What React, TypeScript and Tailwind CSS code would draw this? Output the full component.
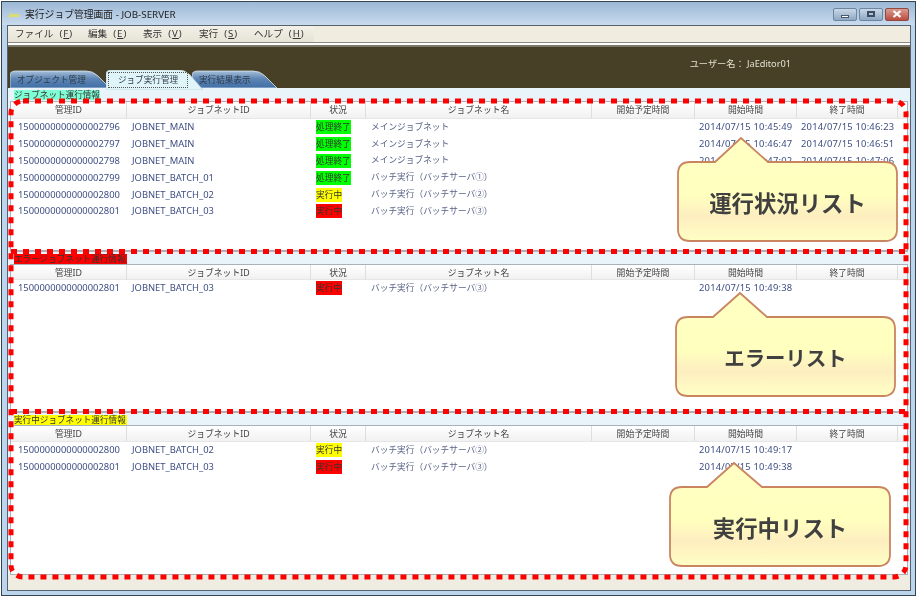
const SANS = "font-['Noto_Sans','Noto_Sans_CJK_JP',sans-serif]";

type Row = { id: string; net: string; status: string; tone: 'green' | 'yellow' | 'red'; name: string; start?: string; end?: string };

const COLS = 'grid-cols-[116px_184px_55px_226px_103px_102px_101px]';
const HEADS = ['管理ID', 'ジョブネットID', '状況', 'ジョブネット名', '開始予定時間', '開始時間', '終了時間'];

const running: Row[] = [
  { id: '1500000000000002796', net: 'JOBNET_MAIN', status: '処理終了', tone: 'green', name: 'メインジョブネット', start: '2014/07/15 10:45:49', end: '2014/07/15 10:46:23' },
  { id: '1500000000000002797', net: 'JOBNET_MAIN', status: '処理終了', tone: 'green', name: 'メインジョブネット', start: '2014/07/15 10:46:47', end: '2014/07/15 10:46:51' },
  { id: '1500000000000002798', net: 'JOBNET_MAIN', status: '処理終了', tone: 'green', name: 'メインジョブネット', start: '2014/07/15 10:47:02', end: '2014/07/15 10:47:06' },
  { id: '1500000000000002799', net: 'JOBNET_BATCH_01', status: '処理終了', tone: 'green', name: 'バッチ実行（バッチサーバ①）' },
  { id: '1500000000000002800', net: 'JOBNET_BATCH_02', status: '実行中', tone: 'yellow', name: 'バッチ実行（バッチサーバ②）' },
  { id: '1500000000000002801', net: 'JOBNET_BATCH_03', status: '実行中', tone: 'red', name: 'バッチ実行（バッチサーバ③）' },
];

const err: Row[] = [{ ...running[5], start: '2014/07/15 10:49:38' }];
const active: Row[] = [
  { ...running[4], start: '2014/07/15 10:49:17' },
  { ...running[5], start: '2014/07/15 10:49:38' },
];

const toneClass = { green: 'bg-[#00ff00]', yellow: 'bg-[#ffff00]', red: 'bg-[#ff0000]' };

function Table({ rows, headClass }: { rows: Row[]; headClass: string }) {
  return (
    <div className="flex-1 min-h-0 bg-white border border-[#a9b2b8] overflow-hidden">
      <div className={`grid ${COLS} ${headClass} bg-gradient-to-b from-white to-[#f1f1f1] border-b border-[#e6e6e6]`}>
        {HEADS.map((h) => (
          <div key={h} className="flex items-center justify-center pt-[2px] border-r border-[#dedede] text-[8.8px] text-[#444]">
            {h}
          </div>
        ))}
      </div>
      {rows.map((r) => (
        <div key={r.id} className={`grid ${COLS} h-[16.8px] items-center text-[9.4px] text-[#3f4f85] whitespace-nowrap`}>
          <div className="pl-[7px]">{r.id}</div>
          <div className="pl-[5px]">{r.net}</div>
          <div className="pl-[5px]">
            <span className={`inline-block h-[14px] leading-[14px] text-[8.7px] text-[#333] ${toneClass[r.tone]}`}>{r.status}</span>
          </div>
          <div className="pl-[5px] text-[8.7px] text-[#5a6488]">{r.name}</div>
          <div />
          <div className="pl-[4px] tracking-[0.2px]">{r.start}</div>
          <div className="pl-[4px] tracking-[0.2px]">{r.end}</div>
        </div>
      ))}
    </div>
  );
}

function Panel({ label, labelClass, rowClass, panelClass, headClass, rows }: { label: string; labelClass: string; rowClass: string; panelClass: string; headClass: string; rows: Row[] }) {
  return (
    <div className={`${panelClass} flex flex-col px-[2px] bg-[#e8f3fa]`}>
      <div className={`${rowClass} flex items-end pl-[4px]`}>
        <span className={`h-[10px] leading-[10px] text-[8.6px] text-[#333] whitespace-nowrap ${labelClass}`}>{label}</span>
      </div>
      <Table rows={rows} headClass={headClass} />
    </div>
  );
}

function Tab({ label, width, isActive, className }: { label: string; width: number; isActive?: boolean; className: string }) {
  const h = isActive ? 20 : 18;
  return (
    <div className={`relative shrink-0 ${isActive ? 'h-[20px] z-10' : 'h-[18px]'} ${className}`} style={{ width }}>
      <svg className="absolute inset-0 w-full h-full" viewBox={`0 0 ${width} ${h}`} preserveAspectRatio="none">
        <defs>
          <linearGradient id="tabBlue" x1="0" x2="0" y1="0" y2="1">
            <stop offset="0" stopColor="#a6bfd9" />
            <stop offset="0.45" stopColor="#5f86b5" />
            <stop offset="1" stopColor="#3f6ea6" />
          </linearGradient>
        </defs>
        <path
          d={isActive
            ? `M0 20 L0 4 Q0 0 6 0 L${width - 24} 0 Q${width - 18} 0 ${width - 13} 5 L${width} 20 Z`
            : `M0 18 L0 5 Q0 1 6 1 L${width - 24} 1 Q${width - 17} 1 ${width - 12} 6 L${width} 18 Z`}
          fill={isActive ? '#e0f5fa' : 'url(#tabBlue)'}
          stroke={isActive ? '#c3d8dd' : '#d9e6ee'}
          strokeWidth="0.8"
        />
      </svg>
      <div className={`relative whitespace-nowrap text-[8.6px] text-[#2d3a45] ${isActive ? 'pl-[2px] pt-[2px]' : 'pt-[4px]'}`}>
        {isActive ? (
          <span className="flex items-center justify-center w-[80px] h-[16px] border border-dotted border-[#555]">{label}</span>
        ) : (
          label
        )}
      </div>
    </div>
  );
}

function Callout({ label, className, base, tip, width, textClass }: { label: string; className: string; base: [number, number]; tip: number; width: number; textClass: string }) {
  const w = width;
  return (
    <div className={`absolute ${className} h-[105px] z-30`} style={{ width: w }}>
      <svg className="absolute inset-0 w-full h-full overflow-visible" viewBox={`0 0 ${w} 105`}>
        <defs>
          <linearGradient id="calloutFill" x1="0" x2="0" y1="0" y2="1">
            <stop offset="0" stopColor="#ffffc4" />
            <stop offset="0.55" stopColor="#ffffbe" />
            <stop offset="0.76" stopColor="#fdeec0" />
            <stop offset="1" stopColor="#ffffc4" />
          </linearGradient>
        </defs>
        <path
          d={`M13 25 L${base[0]} 25 L${tip} 1 L${base[1]} 25 L${w - 13} 25 Q${w - 1} 25 ${w - 1} 37 L${w - 1} 92 Q${w - 1} 104 ${w - 13} 104 L13 104 Q1 104 1 92 L1 37 Q1 25 13 25 Z`}
          fill="url(#calloutFill)"
          stroke="#c98560"
          strokeWidth="1.8"
        />
      </svg>
      <div className={`absolute left-0 right-0 top-[26px] h-[79px] flex items-center justify-center font-bold text-[#404040] font-['Noto_Sans_CJK_JP',sans-serif] ${textClass}`}>
        {label}
      </div>
    </div>
  );
}

function Annotations() {
  const stroke = { stroke: '#ff0000', strokeWidth: 5, strokeDasharray: '6 6', fill: 'none' };
  return (
    <svg className="absolute left-0 top-0 w-[918px] h-[597px] z-20 pointer-events-none" viewBox="0 0 918 597">
      <rect x="11" y="101" width="895" height="476" rx="12" {...stroke} />
      <path d="M11 251.5 H906" {...stroke} />
      <path d="M11 411.5 H906" {...stroke} />
    </svg>
  );
}

function WinButton({ className, children }: { className: string; children: React.ReactNode }) {
  return (
    <div className={`h-[13px] flex items-center justify-center rounded-[2px] border border-[#6f86a0] ${className}`}>{children}</div>
  );
}

export default function App() {
  const menus = [
    ['ファイル', 'F', 'w-[73px]'],
    ['編集', 'E', 'w-[55px]'],
    ['表示', 'V', 'w-[56px]'],
    ['実行', 'S', 'w-[55px]'],
    ['ヘルプ', 'H', 'w-[60px]'],
  ];
  return (
    <div className={`relative w-[918px] h-[597px] bg-white overflow-hidden blur-[0.3px] ${SANS}`}>
      <div className="ml-px mt-px w-[915px] h-[595px] border border-[#33454f] bg-[#bcd4ec] flex flex-col">
        <div className="h-[23px] shrink-0 flex items-center pl-[7px] pr-[5px] bg-gradient-to-b from-[#9cb8d6] to-[#c9dbee]">
          <span className="w-[16px] mt-[4px] text-[5px] italic font-bold text-[#f7e623] leading-none">Java</span>
          <span className="mt-[4px] text-[9.8px] text-[#222] whitespace-nowrap">実行ジョブ管理画面 - JOB-SERVER</span>
          <div className="ml-auto flex gap-[2px] mt-[1px] mr-[1px]">
            <WinButton className="w-[24px] bg-gradient-to-b from-[#c9d8e8] to-[#8fa8c4]">
              <div className="w-[8px] h-[3px] bg-white border border-[#48586a] mt-[4px]" />
            </WinButton>
            <WinButton className="w-[24px] bg-gradient-to-b from-[#c9d8e8] to-[#8fa8c4]">
              <div className="w-[8px] h-[6px] bg-transparent border-2 border-[#3e4e60]" />
            </WinButton>
            <WinButton className="w-[24px] border-[#8f4a42] bg-gradient-to-b from-[#d99a90] to-[#bb4b3f]">
              <svg width="10" height="8" viewBox="0 0 10 8">
                <path d="M1.5 1 L8.5 7 M8.5 1 L1.5 7" stroke="#ffffff" strokeWidth="2.2" />
              </svg>
            </WinButton>
          </div>
        </div>
        <div className="ml-[5px] w-[904px] h-[566px] shrink-0 border border-[#56626c] bg-[#f0ede0] flex flex-col">
          <div className="h-[16px] shrink-0 flex bg-[#f0ede0]">
            <div className="w-[306px] h-full flex items-center pl-[7px] bg-gradient-to-b from-[#f3f1e8] to-[#e6e3d6] text-[9.6px] text-[#333]">
              {menus.map(([t, k, w]) => (
                <span key={k} className={`${w} shrink-0 whitespace-nowrap`}>
                  {t}
                  <span className="ml-[6px] tracking-[1px]">
                    (<span className="underline">{k}</span>)
                  </span>
                </span>
              ))}
            </div>
          </div>
          <div className="h-[5px] shrink-0 border-t border-[#8d8a7f] bg-white border-b-2 border-b-[#7a7668]" />
          <div className="h-[41px] shrink-0 bg-[#474027] flex flex-col">
            <div className="h-[23px] shrink-0 flex items-center pt-[11px] justify-end pr-[119px] text-[9.2px] text-[#e4e0cd]">
              <span className="whitespace-nowrap">ユーザー名： JaEditor01</span>
            </div>
            <div className="h-[18px] flex items-start pl-[2px]">
              <Tab label="オブジェクト管理" width={100} className="pl-[7px]" />
              <Tab label="ジョブ実行管理" width={97} isActive className="-ml-[4px]" />
              <Tab label="実行結果表示" width={85} className="-ml-[11px] pl-[7px]" />
            </div>
          </div>
          <Panel
            label="ジョブネット運行情報"
            labelClass="bg-[#7fffd4] w-[86px]"
            rowClass="h-[13px] pb-[1px]"
            panelClass="h-[163px] shrink-0"
            headClass="h-[17px]"
            rows={running}
          />
          <Panel
            label="エラージョブネット運行情報"
            labelClass="bg-[#ff0000] w-[113px]"
            rowClass="h-[13px] border-t border-[#a9b2b8]"
            panelClass="h-[161px] shrink-0"
            headClass="h-[15px]"
            rows={err}
          />
          <Panel
            label="実行中ジョブネット運行情報"
            labelClass="bg-[#ffff00] w-[113px]"
            rowClass="h-[13px] border-t border-[#a9b2b8]"
            panelClass="h-[163px] shrink-0"
            headClass="h-[16px]"
            rows={active}
          />
          <div className="flex-1 bg-[#efece2]" />
        </div>
      </div>
      <Annotations />
      <Callout label="運行状況リスト" className="left-[677px] top-[137px]" width={221} base={[38, 91]} tip={64} textClass="text-[22.4px]" />
      <Callout label="エラーリスト" className="left-[675px] top-[292px]" width={221} base={[38, 92]} tip={65} textClass="text-[20.4px]" />
      <Callout label="実行中リスト" className="left-[669px] top-[462px]" width={222} base={[38, 93]} tip={65} textClass="text-[22.4px]" />
    </div>
  );
}
